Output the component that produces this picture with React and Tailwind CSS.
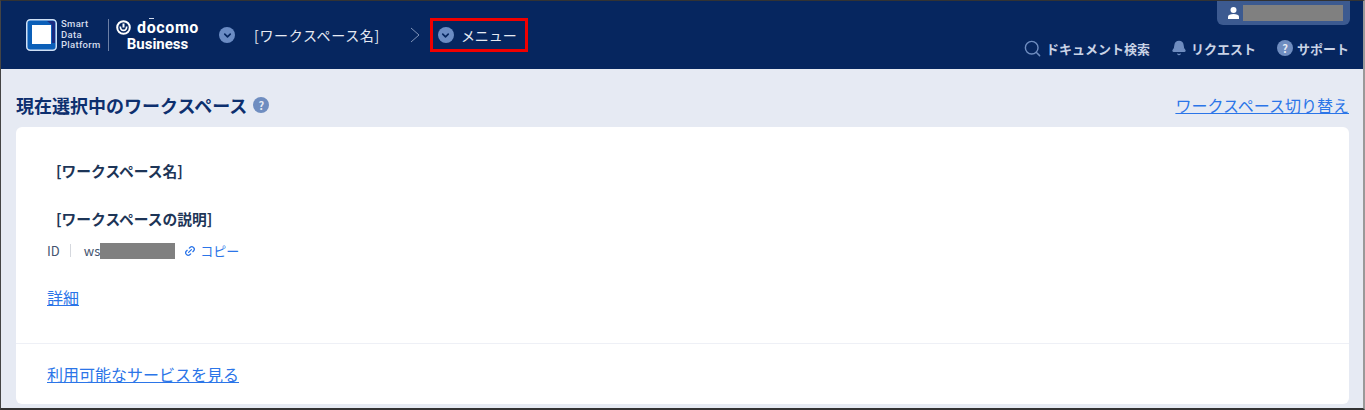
import { ChevronDown, Search, Bell, Link2 } from 'lucide-react'

const jp = { fontFamily: '"Noto Sans CJK JP", "Noto Sans", sans-serif' }
const latin = { fontFamily: 'Roboto, sans-serif' }

const Logo = () => (
  <svg width="31" height="32" viewBox="0 0 31 32" className="shrink-0">
    <rect x="0.75" y="0.75" width="29.5" height="30.5" rx="3.5" fill="#0b5fb8" stroke="#cfe0f5" strokeWidth="1.5" />
    <path d="M21 2h6a2 2 0 0 1 2 2v20h-3V6z" fill="#1b2a80" />
    <rect x="6" y="6" width="19" height="19" fill="#ffffff" />
  </svg>
)

const RoundChevron = () => (
  <span className="flex h-4 w-4 shrink-0 items-center justify-center rounded-full bg-[#6b8cc4]">
    <ChevronDown size={11} strokeWidth={3.5} className="text-[#06265f]" />
  </span>
)

const HelpDot = () => (
  <span className="flex h-4 w-4 items-center justify-center rounded-full bg-[#6f8dc0] text-[11px] font-bold text-[#e6eaf3]">?</span>
)

const NavItem = ({ icon, label }) => (
  <div className="flex items-center gap-1 text-[13px] font-semibold text-[#c9d3e6]">
    {icon}
    <span>{label}</span>
  </div>
)

const App = () => {
  return (
    <div style={jp} className="flex h-[410px] w-[1365px] flex-col overflow-hidden border-t border-b-2 border-l border-r-2 border-t-[#333] border-b-[#333] border-l-[#444] border-r-[#999] bg-[#e6eaf3]">
      {/* Header */}
      <header className="flex h-[68px] shrink-0 items-center justify-between bg-[#06265f] pl-[25px] pr-[13px]">
        <div className="flex items-center">
          <div className="flex items-center">
            <Logo />
            <div style={latin} className="ml-[4px] w-[47px] text-[9.5px] leading-[10.500px] font-medium tracking-[0.3px] text-[#d5dded]">
              <div>Smart</div>
              <div>Data</div>
              <div>Platform</div>
            </div>
            <div className="h-8 w-px bg-[#6b7fa6]" />
            <div style={latin} className="mt-[2px] ml-[7px] w-[83px] text-center text-white">
              <div className="relative flex items-center justify-between">
                <svg width="15" height="15" viewBox="0 0 15 15">
                  <circle cx="7.5" cy="7.5" r="6.3" fill="none" stroke="#fff" strokeWidth="2" />
                  <path d="M7.500 3.500v4" stroke="#fff" strokeWidth="2" />
                  <path d="M4.500 6.500a3.100 3.100 0 1 0 6 0" fill="none" stroke="#fff" strokeWidth="1.700" />
                </svg>
                <span className="text-[16px] leading-[17px] font-bold tracking-[0.6px]">docomo</span>
                <span className="absolute top-[-1px] left-[33px] h-px w-[5px] bg-[#d5dded]" />
              </div>
              <div className="text-[15px] leading-[17px] font-bold">Business</div>
            </div>
          </div>
          <div className="ml-[20px]">
            <RoundChevron />
          </div>
          <span className="ml-[19px] text-[14px] tracking-[0.65px] text-[#e6eaf3]">[ワークスペース名]</span>
          <svg width="10" height="16" viewBox="0 0 10 16" className="ml-[30px]">
            <path d="M1 1l8 7-8 7" fill="none" stroke="#7f93b8" strokeWidth="1" />
          </svg>
          <div className="ml-[10px] flex h-[34px] w-[98px] items-center gap-[7px] border-[3px] border-[#f00000] pl-[5px]">
            <RoundChevron />
            <span className="text-[14px] text-[#e6eaf3]">メニュー</span>
          </div>
        </div>
        <div className="flex h-full flex-col items-end justify-between">
          <div className="flex h-[24px] w-[133px] items-center rounded-b-md bg-[#3c5a90] pb-[1px] pl-[11px]">
            <svg width="11" height="12" viewBox="0 0 11 12" className="shrink-0">
              <circle cx="5.500" cy="3" r="3" fill="#fff" />
              <path d="M0 12V9.500C0 8 2.500 7 5.500 7s5.500 1 5.500 2.500V12z" fill="#fff" />
            </svg>
            <div className="ml-[4px] h-[16px] w-[100px] bg-[#808080]" />
          </div>
          <div className="mr-[1px] mb-[11px] flex items-center gap-[21px]">
            <NavItem icon={<Search size={19} strokeWidth={1.8} className="text-[#6f8dc0]" />} label="ドキュメント検索" />
            <NavItem icon={<Bell size={16} fill="#6f8dc0" className="text-[#6f8dc0]" />} label="リクエスト" />
            <NavItem icon={<HelpDot />} label="サポート" />
          </div>
        </div>
      </header>

      {/* Main */}
      <main className="flex flex-1 flex-col pr-[14px] pl-[15px]">
        <div className="flex h-[58px] shrink-0 items-center justify-between pt-[14px]">
          <div className="flex items-center gap-[6px]">
            <h1 className="text-[18px] font-bold text-[#0d2f6e]">現在選択中のワークスペース</h1>
            <HelpDot />
          </div>
          <a href="#" className="text-[16px] text-[#2b75e8] underline">ワークスペース切り替え</a>
        </div>

        <section className="flex flex-col rounded-md bg-white">
          <div className="h-[217px] border-b border-[#eef0f6] px-[30px]">
            <div className="px-[10px] pt-[34px] text-[14.75px] leading-[20px] font-semibold text-[#1d3557]">[ワークスペース名]</div>
            <div className="px-[10px] pt-[28px] text-[14.75px] leading-[20px] font-semibold text-[#1d3557]">[ワークスペースの説明]</div>
            <div className="mt-[12px] flex items-center pl-[1px] text-[13px] text-[#44546f]">
              <span>ID</span>
              <span className="ml-[10px] h-[13px] w-px bg-[#d5d8de]" />
              <span className="ml-[13px]">ws</span>
              <span className="h-[16px] w-[75px] bg-[#808080]" />
              <Link2 size={12} strokeWidth={2.5} className="ml-[9px] -rotate-45 text-[#2b75e8]" />
              <span className="ml-[4px] text-[#2b75e8]">コピー</span>
            </div>
            <a href="#" className="mt-[24px] ml-[1px] inline-block text-[16px] text-[#2b75e8] underline">詳細</a>
          </div>
          <div className="flex h-[60px] items-center px-[31px]">
            <a href="#" className="text-[16px] text-[#2b75e8] underline">利用可能なサービスを見る</a>
          </div>
        </section>
      </main>
    </div>
  )
}

export default App
